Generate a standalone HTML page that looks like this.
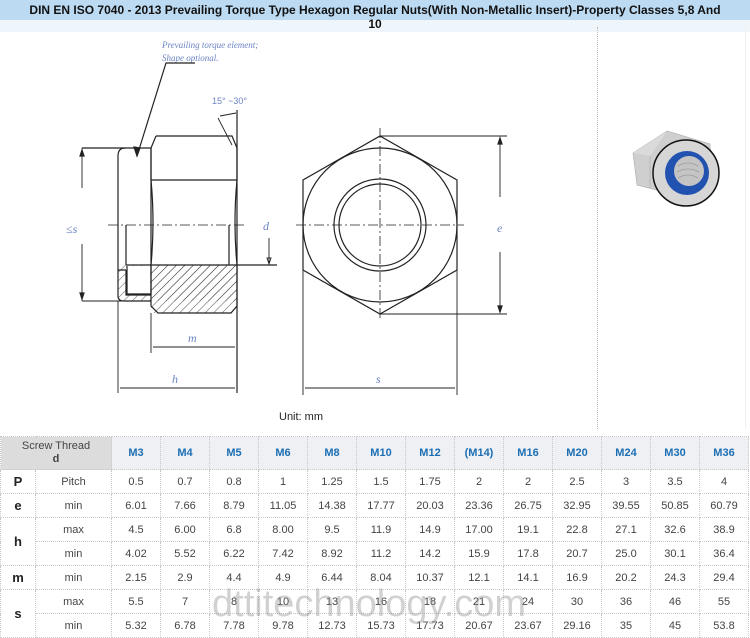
<!DOCTYPE html>
<html><head><meta charset="utf-8"><style>
body{margin:0;width:750px;height:637px;overflow:hidden;background:#fff;font-family:"Liberation Sans",Arial,sans-serif;position:relative}
.t1{position:absolute;left:0;top:0;width:750px;height:20px;background:#bcdaf2;font-weight:bold;font-size:12px;text-align:center;line-height:20px;color:#111}
.t2{position:absolute;left:0;top:20px;width:750px;height:12px;background:#eef6fc;font-weight:bold;font-size:12px;text-align:center;line-height:8px;color:#111}
table{position:absolute;left:0;top:436px;border-collapse:collapse;table-layout:fixed;font-size:11px;color:#444}
td{border:1px dotted #c8c8c8;text-align:center;padding:0;height:23px}
tr.h td{height:32px;background:#eef0f3;color:#1c6fb5;font-weight:bold}
tr.h td.f{background:#dcdcdc;color:#444;font-weight:normal;line-height:13px}
td.k{font-weight:bold;font-size:13px;color:#222}
.wm{position:absolute;left:212px;top:583px;font-size:38px;color:rgba(140,140,140,.4);letter-spacing:0}
</style></head><body>
<div class="t1">DIN EN ISO 7040 - 2013 Prevailing Torque Type Hexagon Regular Nuts(With Non-Metallic Insert)-Property Classes 5,8 And</div>
<div class="t2">10</div>
<div style="position:absolute;left:597px;top:27px;width:0;height:402px;border-left:1px dotted #bbb"></div>
<div style="position:absolute;left:745px;top:27px;width:0;height:402px;border-left:1px solid #eee"></div>
<svg width="750" height="436" style="position:absolute;left:0;top:0" fill="none" stroke="#222" stroke-width="1.2">
<defs><pattern id="hp" width="6" height="6" patternUnits="userSpaceOnUse" patternTransform="rotate(45)"><line x1="0" y1="0" x2="0" y2="6" stroke="#333" stroke-width="0.8"/></pattern></defs>
<text x="162" y="48" font-family="Liberation Serif" font-style="italic" font-size="9" fill="#6c84c4" stroke="none">Prevailing torque element;</text>
<text x="162" y="61" font-family="Liberation Serif" font-style="italic" font-size="9" fill="#6c84c4" stroke="none">Shape optional.</text>
<path d="M195 63 H166 L137 156" />
<path d="M137 156 l-3 -9 l6 1z" fill="#222"/>
<text x="212" y="104" font-size="9" fill="#6c84c4" stroke="none">15°  ~30°</text>
<path d="M218 118 L232 145 M220 116 L236 113" stroke-width="0.9"/>
<path d="M237 110 V393"/>
<path d="M125 148 Q118 148 118 156 V296 Q118 301 124 301 H151"/>
<path d="M82 148 H151 M151 148 V301"/>
<path d="M156 136 H232 L237 148 V180 M156 136 L151 148 V180 M151 180 H237"/>
<path d="M151 180 Q155 222 151 265 M237 180 Q233 222 237 265"/>
<path d="M126 225 V265 M229 225 V265"/>
<rect x="118" y="265" width="119" height="36" fill="url(#hp)" stroke="none"/>
<rect x="151" y="265" width="86" height="48" fill="url(#hp)" stroke="none"/>
<path d="M126 265 H237 V306 L231 313 H158 L151 306 V301"/>
<path d="M126 270 V295 H151 M118 270 H126"/>
<rect x="127" y="266" width="23" height="28" fill="#fff" stroke="none"/>
<path d="M127 266 V294 H151 V266"/>
<path d="M108 225 H245" stroke-dasharray="10 3 2 3" stroke-width="0.8"/>
<path d="M237 265 H277"/>
<path d="M82 148 V188 M82 244 V301 M82 301 H126" stroke-width="0.9"/>
<path d="M82 150 l-2 6 h4z M82 299 l-2 -6 h4z" fill="#222"/>
<text x="66" y="233" font-family="Liberation Serif" font-style="italic" font-size="12" fill="#6c84c4" stroke="none">≤s</text>
<text x="263" y="230" font-family="Liberation Serif" font-style="italic" font-size="12" fill="#6c84c4" stroke="none">d</text>
<path d="M269 238 V264 M269 264 l-2 -6 h4z" stroke-width="0.9"/>
<path d="M151 313 V353 M153 347 H235" stroke-width="0.9"/>
<text x="188" y="342" font-family="Liberation Serif" font-style="italic" font-size="12" fill="#6c84c4" stroke="none">m</text>
<path d="M118 301 V393 M120 388 H235" stroke-width="0.9"/>
<text x="172" y="383" font-family="Liberation Serif" font-style="italic" font-size="12" fill="#6c84c4" stroke="none">h</text>
<path d="M380 136 L457 180 V270 L380 314 L303 270 V180 Z"/>
<circle cx="380" cy="225" r="77"/>
<circle cx="380" cy="225" r="46"/>
<circle cx="380" cy="225" r="41"/>
<path d="M296 225 H464 M380 128 V320" stroke-dasharray="10 3 2 3" stroke-width="0.8"/>
<path d="M380 136 H507 M380 314 H507 M500 138 V197 M500 252 V312" stroke-width="0.9"/>
<path d="M500 138 l-2 6 h4z M500 312 l-2 -6 h4z" fill="#222"/>
<text x="497" y="232" font-family="Liberation Serif" font-style="italic" font-size="12" fill="#6c84c4" stroke="none">e</text>
<path d="M303 270 V395 M457 270 V395 M305 388 H455" stroke-width="0.9"/>
<text x="376" y="383" font-family="Liberation Serif" font-style="italic" font-size="12" fill="#6c84c4" stroke="none">s</text>
<text x="279" y="420" font-size="11" fill="#222" stroke="none">Unit: mm</text>
<g>
<path d="M633 153 L667 131 L710 144 L712 175 L680 196 L637 185 Z" fill="#cfcfcf" stroke="#aaa" stroke-width="0.6"/>
<path d="M633 153 L650 156 L667 131 Z" fill="#dadada" stroke="none"/>
<path d="M650 156 V188" stroke="#aaa" stroke-width="0.6"/>
<circle cx="686" cy="173" r="33" fill="#d6d6d6" stroke="#111" stroke-width="1.5"/>
<circle cx="687" cy="173" r="22" fill="#2152b0" stroke="none"/>
<circle cx="689" cy="171" r="15" fill="#c4c4c4" stroke="none"/>
<path d="M678 166 q10 -6 20 0 M677 172 q11 -6 22 0 M678 178 q10 -6 20 0" stroke="#999" stroke-width="0.8"/>
</g>
</svg>
<table>
<colgroup><col style="width:35px"><col style="width:76px"><col span="13" style="width:49px"></colgroup>
<tr class="h"><td class="f" colspan="2">Screw Thread<br><b>d</b></td><td>M3</td><td>M4</td><td>M5</td><td>M6</td><td>M8</td><td>M10</td><td>M12</td><td>(M14)</td><td>M16</td><td>M20</td><td>M24</td><td>M30</td><td>M36</td></tr>
<tr><td class="k">P</td><td>Pitch</td><td>0.5</td><td>0.7</td><td>0.8</td><td>1</td><td>1.25</td><td>1.5</td><td>1.75</td><td>2</td><td>2</td><td>2.5</td><td>3</td><td>3.5</td><td>4</td></tr>
<tr><td class="k">e</td><td>min</td><td>6.01</td><td>7.66</td><td>8.79</td><td>11.05</td><td>14.38</td><td>17.77</td><td>20.03</td><td>23.36</td><td>26.75</td><td>32.95</td><td>39.55</td><td>50.85</td><td>60.79</td></tr>
<tr><td class="k" rowspan="2">h</td><td>max</td><td>4.5</td><td>6.00</td><td>6.8</td><td>8.00</td><td>9.5</td><td>11.9</td><td>14.9</td><td>17.00</td><td>19.1</td><td>22.8</td><td>27.1</td><td>32.6</td><td>38.9</td></tr>
<tr><td>min</td><td>4.02</td><td>5.52</td><td>6.22</td><td>7.42</td><td>8.92</td><td>11.2</td><td>14.2</td><td>15.9</td><td>17.8</td><td>20.7</td><td>25.0</td><td>30.1</td><td>36.4</td></tr>
<tr><td class="k">m</td><td>min</td><td>2.15</td><td>2.9</td><td>4.4</td><td>4.9</td><td>6.44</td><td>8.04</td><td>10.37</td><td>12.1</td><td>14.1</td><td>16.9</td><td>20.2</td><td>24.3</td><td>29.4</td></tr>
<tr><td class="k" rowspan="2">s</td><td>max</td><td>5.5</td><td>7</td><td>8</td><td>10</td><td>13</td><td>16</td><td>18</td><td>21</td><td>24</td><td>30</td><td>36</td><td>46</td><td>55</td></tr>
<tr><td>min</td><td>5.32</td><td>6.78</td><td>7.78</td><td>9.78</td><td>12.73</td><td>15.73</td><td>17.73</td><td>20.67</td><td>23.67</td><td>29.16</td><td>35</td><td>45</td><td>53.8</td></tr>
</table>
<div class="wm">dttitechnology.com</div>
</body></html>
